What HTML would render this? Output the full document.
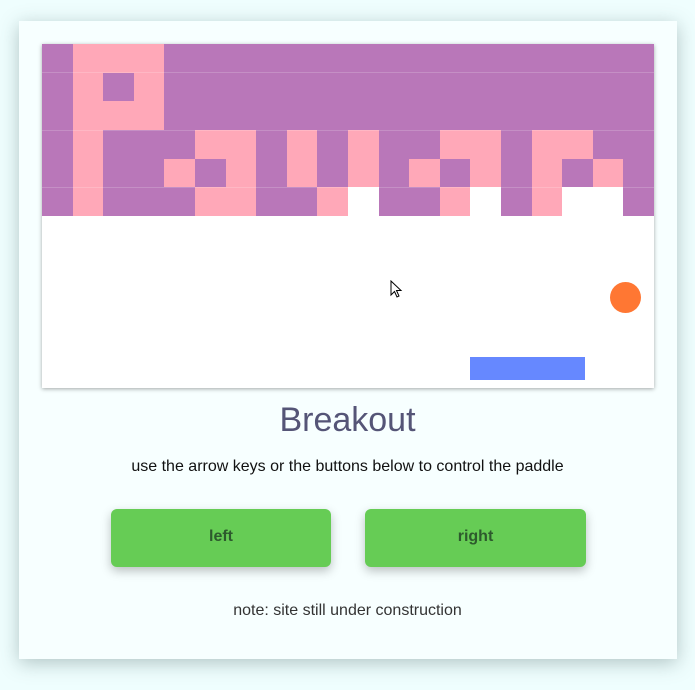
<!DOCTYPE html>
<html><head><meta charset="utf-8"><style>
html,body{margin:0;padding:0;width:695px;height:690px;background:#effefe;overflow:hidden;font-family:"Liberation Sans",Arial,sans-serif}
.card{position:absolute;left:19px;top:21px;width:658px;height:638px;background:#f7ffff;box-shadow:0 4px 18px rgba(60,90,90,.35)}
.cv{position:absolute;left:42px;top:44px;width:612px;height:344px;background:#fff;box-shadow:0 1px 4px rgba(0,0,0,.35)}
.c{position:absolute;width:30.6px;height:28.67px}
.M{background:#b977b9}.P{background:#ffa8b8}
.ln{position:absolute;left:0;width:612px;height:1px;background:rgba(255,255,255,.18)}
h1{position:absolute;left:0;width:695px;top:401px;margin:0;text-align:center;font-weight:normal;font-size:34px;color:#555577}
.sub{position:absolute;left:0;width:695px;top:458px;text-align:center;font-size:16px;color:#111}
.btn{position:absolute;top:509px;height:58px;background:#66cc55;border-radius:6px;box-shadow:0 4px 10px rgba(0,0,0,.25);color:#2d5a2d;font-weight:bold;font-size:16px;text-align:center;line-height:56px}
.note{position:absolute;left:0;width:695px;top:602px;text-align:center;font-size:16px;color:#333}
</style></head><body>
<div class="card"></div>
<div class="cv" id="cv">
<div style="position:absolute;left:568px;top:238px;width:31px;height:31px;border-radius:50%;background:#ff7733"></div>
<div style="position:absolute;left:428px;top:313px;width:115px;height:23px;background:#6688ff"></div>
<svg style="position:absolute;left:348px;top:236px" width="14" height="20" viewBox="0 0 14 20"><path d="M1 1 L1 15 L4.5 11.5 L7 17 L9 16 L6.5 10.5 L11 10.5 Z" fill="#fff" stroke="#000" stroke-width="1"/></svg>
</div>
<script>
var rows=["MPPPMMMMMMMMMMMMMMMM","MPMPMMMMMMMMMMMMMMMM","MPPPMMMMMMMMMMMMMMMM","MPMMMPPMPMPMMPPMPPMM","MPMMPMPMPMPMPMPMPMPM","MPMMMPPMMPWMMPWMPWWM"];
var cv=document.getElementById('cv'),h='';
for(var r=0;r<6;r++)for(var c=0;c<20;c++){var t=rows[r][c];if(t=='W')continue;h+='<div class="c '+t+'" style="left:'+(c*30.6)+'px;top:'+(r*28.67)+'px"></div>';}
h+='<div class="ln" style="top:28px"></div><div class="ln" style="top:86px"></div><div class="ln" style="top:143px"></div>';
cv.insertAdjacentHTML('afterbegin',h);
</script>
<h1>Breakout</h1>
<div class="sub">use the arrow keys or the buttons below to control the paddle</div>
<div class="btn" style="left:111px;width:220px">left</div>
<div class="btn" style="left:365px;width:221px">right</div>
<div class="note">note: site still under construction</div>
</body></html>
